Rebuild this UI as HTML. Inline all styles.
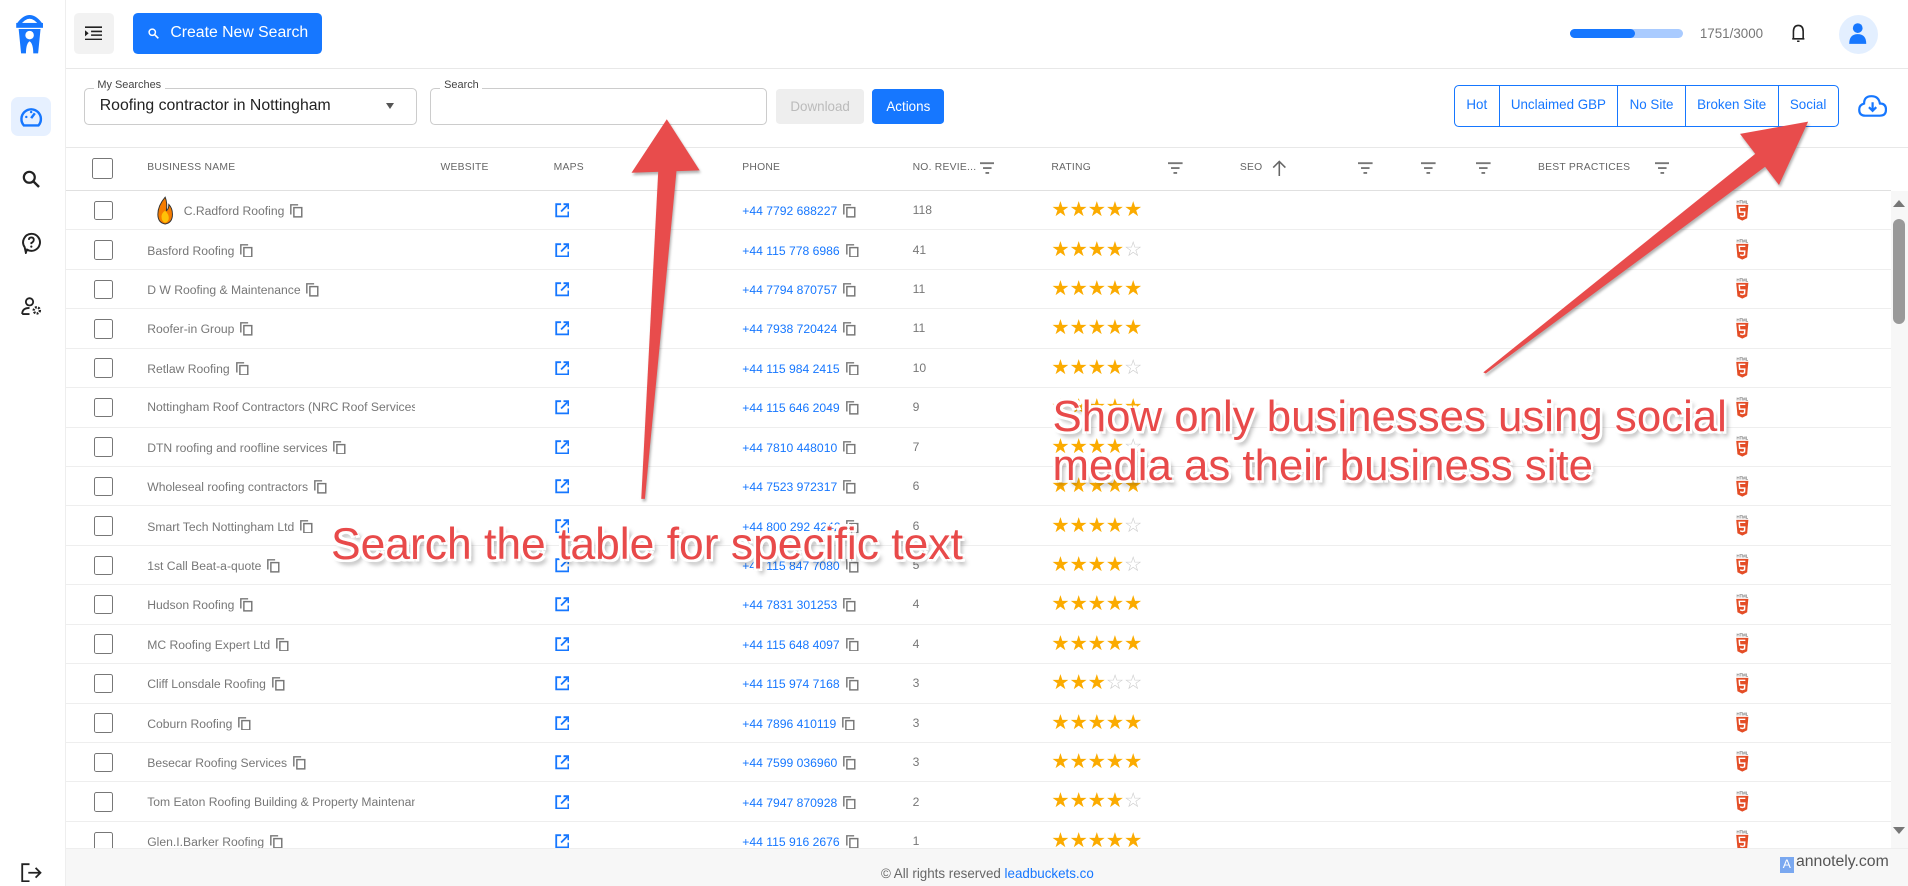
<!DOCTYPE html>
<html><head><meta charset="utf-8"><style>
*{box-sizing:border-box;margin:0;padding:0}
html,body{width:1908px;height:886px;overflow:hidden;background:#fff;font-family:"Liberation Sans",sans-serif}
#w{position:absolute;left:0;top:0;width:1568px;height:728px;zoom:1.2168;overflow:hidden}
.a{position:absolute}
.side{left:0;top:0;width:54px;height:728px;border-right:1px solid #eee;background:#fff}
.top{left:54px;top:0;right:0;height:57px;border-bottom:1px solid #e8e8e8}
.hdr{font-size:8.5px;color:#666;letter-spacing:.2px;top:133px}
.row{position:absolute;left:54px;width:1500px;height:32.4px;border-bottom:1px solid #eee;font-size:10px;color:#777}
.row>*{position:absolute;top:10px}
.cb{left:23px;top:8px!important;width:16px;height:16px;border:1.5px solid #777;border-radius:2px}
.ph{color:#1677ff}
.st{color:#fbab00;font-size:17px;letter-spacing:-0.3px;top:5px!important}
.st i{color:#ccc;font-style:normal}
.cp{display:inline-block;width:12px;height:12px;margin-left:4px;vertical-align:-2px}
.ann{font-size:35.5px;color:#e84a4a;text-shadow:0 0 3px #fff,2px 2px 0 #fff,-2px -2px 0 #fff,2px -2px 0 #fff,-2px 2px 0 #fff,3px 4px 4px rgba(0,0,0,.35);line-height:40px;white-space:nowrap}
.seg{left:1195px;top:70px;height:34px;border:1px solid #1677ff;border-radius:4px;display:flex;font-size:11px;color:#1677ff}
.seg div{padding:0 9.3px;line-height:32px;border-right:1px solid #1677ff}
.seg div:last-child{border:none}
</style></head><body><div id="w">
<svg width="0" height="0" style="position:absolute"><defs><g id="f"><path d="M0 1H12M2.5 5H9.5M4.5 9H7.5" stroke="#777" stroke-width="1.5"/></g><g id="c"><path d="M1.5 9.5V1.5H7.5" fill="none" stroke="#777" stroke-width="1.2"/><rect x="4" y="3.8" width="6.5" height="7.6" fill="none" stroke="#777" stroke-width="1.2"/></g></defs></svg>
<div class="a side">
<svg class="a" style="left:12px;top:10px" width="24" height="34" viewBox="0 0 24 34"><path d="M3 10 Q12 -2 21 10" fill="none" stroke="#1677ff" stroke-width="3"/><rect x="1" y="9" width="22" height="4" fill="#1677ff"/><path d="M3 14 H21 L19 34 H15 Q15 26 12 24 Q9 26 9 34 H5 Z" fill="#1677ff"/><circle cx="12" cy="19" r="3.5" fill="#fff"/></svg>
<div class="a" style="left:9px;top:80px;width:33px;height:32px;background:#e6f0ff;border-radius:6px"></div>
<svg class="a" style="left:16px;top:87px" width="20" height="18" viewBox="0 0 20 18"><path d="M4 16 A8 8 0 1 1 16 16 Z" fill="none" stroke="#1677ff" stroke-width="2"/><path d="M10 10 L13 6" stroke="#1677ff" stroke-width="2"/><circle cx="6" cy="9" r="1" fill="#1677ff"/><circle cx="10" cy="5" r="1" fill="#1677ff"/></svg>
<svg class="a" style="left:18px;top:140px" width="16" height="16" viewBox="0 0 16 16"><circle cx="6" cy="6" r="4.5" fill="none" stroke="#222" stroke-width="1.8"/><path d="M9.5 9.5 L14 14" stroke="#222" stroke-width="2"/></svg>
<svg class="a" style="left:17px;top:191px" width="17" height="18" viewBox="0 0 17 18"><path d="M8.5 1.5 A7 7 0 1 1 5 14.5 L4 17 L3 12.5 A7 7 0 0 1 8.5 1.5Z" fill="none" stroke="#222" stroke-width="1.6"/><path d="M6.5 6.5 Q6.5 4.5 8.5 4.5 Q10.5 4.5 10.5 6.5 Q10.5 8 8.5 9 V10" fill="none" stroke="#222" stroke-width="1.5"/><circle cx="8.5" cy="12" r=".9" fill="#222"/></svg>
<svg class="a" style="left:17px;top:244px" width="18" height="16" viewBox="0 0 18 16"><circle cx="7" cy="4" r="3" fill="none" stroke="#222" stroke-width="1.5"/><path d="M1 14 Q1 9 7 9 M1 14 H7" fill="none" stroke="#222" stroke-width="1.5"/><circle cx="13" cy="11" r="2.5" fill="none" stroke="#222" stroke-width="2" stroke-dasharray="1.5 1"/></svg>
<svg class="a" style="left:17px;top:709px" width="18" height="16" viewBox="0 0 18 16"><path d="M7 1 H1 V15 H7 M6 8 H16 M12 4 L16 8 L12 12" fill="none" stroke="#222" stroke-width="1.5"/></svg>
</div>
<div class="a top"></div>
<div class="a" style="left:61px;top:11px;width:33px;height:33px;background:#f2f2f2;border-radius:4px"></div>
<svg class="a" style="left:70px;top:21px" width="14" height="12" viewBox="0 0 14 12"><path d="M0 1H14M5 4.5H14M5 7.5H14M0 11H14" stroke="#222" stroke-width="1.3"/><path d="M0 3.5L3 6L0 8.5Z" fill="#222"/></svg>
<div class="a" style="left:109px;top:11px;width:156px;height:33px;background:#1677ff;border-radius:4px;color:#fff;font-size:13px;line-height:33px;padding-left:31px">Create New Search</div>
<svg class="a" style="left:122px;top:23px" width="9" height="9" viewBox="0 0 9 9"><circle cx="3.5" cy="3.5" r="2.6" fill="none" stroke="#fff" stroke-width="1.2"/><path d="M5.5 5.5L8.5 8.5" stroke="#fff" stroke-width="1.3"/></svg>
<div class="a" style="left:1290px;top:24px;width:93px;height:7px;background:#a9cbff;border-radius:4px"></div>
<div class="a" style="left:1290px;top:24px;width:54px;height:7px;background:#1677ff;border-radius:4px"></div>
<div class="a" style="left:1397px;top:21px;font-size:11px;color:#777">1751/3000</div>
<svg class="a" style="left:1472px;top:19px" width="12" height="17" viewBox="0 0 12 17"><path d="M2 13 V7 Q2 2 6 2 Q10 2 10 7 V13 H1 H11 M5 15 H7" fill="none" stroke="#222" stroke-width="1.3"/></svg>
<div class="a" style="left:1511px;top:12px;width:32px;height:32px;border-radius:50%;background:#e3efff"></div>
<svg class="a" style="left:1519px;top:18px" width="16" height="20" viewBox="0 0 16 20"><circle cx="8" cy="5" r="4" fill="#1677ff"/><path d="M1 18 Q1 10 8 10 Q15 10 15 18Z" fill="#1677ff"/></svg>

<div class="a" style="left:69px;top:72px;width:274px;height:31px;border:1px solid #ccc;border-radius:4px"></div>
<div class="a" style="left:77px;top:65px;background:#fff;padding:0 3px;font-size:9px;color:#444">My Searches</div>
<div class="a" style="left:82px;top:80px;font-size:13px;color:#222">Roofing contractor in Nottingham</div>
<div class="a" style="left:317px;top:85px;border:4px solid transparent;border-top:5px solid #555"></div>
<div class="a" style="left:353px;top:72px;width:277px;height:31px;border:1px solid #ccc;border-radius:4px"></div>
<div class="a" style="left:362px;top:65px;background:#fff;padding:0 3px;font-size:9px;color:#444">Search</div>
<div class="a" style="left:638px;top:73px;width:72px;height:29px;background:#eee;border-radius:3px;color:#bbb;font-size:11px;line-height:29px;text-align:center">Download</div>
<div class="a" style="left:717px;top:73px;width:59px;height:29px;background:#1677ff;border-radius:3px;color:#fff;font-size:11px;line-height:29px;text-align:center">Actions</div>
<div class="a seg"><div>Hot</div><div>Unclaimed GBP</div><div>No Site</div><div>Broken Site</div><div>Social</div></div>
<svg class="a" style="left:1527px;top:78px" width="24" height="20" viewBox="0 0 24 20"><path d="M6 17 H18 Q23 17 23 12 Q23 7 18 7 Q17 1 11 1 Q5 1 5 7 Q1 8 1 12 Q1 17 6 17Z" fill="none" stroke="#1677ff" stroke-width="1.8"/><path d="M12 6 V13 M9 10 L12 13 L15 10" fill="none" stroke="#1677ff" stroke-width="1.8"/></svg>

<div class="a" style="left:54px;top:121px;width:1514px;border-top:1px solid #e8e8e8"></div>
<div class="a" style="left:54px;top:156px;width:1500px;border-top:1.5px solid #e0e0e0"></div>
<div class="a" style="left:76px;top:130px;width:17px;height:17px;border:1.5px solid #777;border-radius:2px"></div>
<div class="a hdr" style="left:121px">BUSINESS NAME</div>
<div class="a hdr" style="left:362px">WEBSITE</div>
<div class="a hdr" style="left:455px">MAPS</div>
<div class="a hdr" style="left:610px">PHONE</div>
<div class="a hdr" style="left:750px">NO. REVIE...</div>
<div class="a hdr" style="left:864px">RATING</div>
<div class="a hdr" style="left:1019px">SEO</div>
<div class="a hdr" style="left:1264px">BEST PRACTICES</div>
<div class="a hdr" style="left:1438px">S</div>
<svg class="a" style="left:1045px;top:131px" width="12" height="14" viewBox="0 0 12 14"><path d="M6 14V2M1 7L6 2L11 7" fill="none" stroke="#666" stroke-width="1.3"/></svg>
<svg class="a" style="left:805px;top:133px" width="12" height="10"><use href="#f"/></svg>
<svg class="a" style="left:960px;top:133px" width="12" height="10"><use href="#f"/></svg>
<svg class="a" style="left:1116px;top:133px" width="12" height="10"><use href="#f"/></svg>
<svg class="a" style="left:1168px;top:133px" width="12" height="10"><use href="#f"/></svg>
<svg class="a" style="left:1213px;top:133px" width="12" height="10"><use href="#f"/></svg>
<svg class="a" style="left:1360px;top:133px" width="12" height="10"><use href="#f"/></svg>

<div id="rows"></div>

<div class="a" style="left:1554px;top:157px;width:14px;height:540px;background:#f7f7f7"></div>
<div class="a" style="left:1556px;top:180px;width:10px;height:86px;background:#999;border-radius:5px"></div>
<div class="a" style="left:1556px;top:164px;border:5px solid transparent;border-bottom:6px solid #777;border-top:none"></div>
<div class="a" style="left:1556px;top:680px;border:5px solid transparent;border-top:6px solid #777;border-bottom:none"></div>
<div class="a" style="left:54px;top:697px;width:1514px;height:31px;background:#f7f7f7;border-top:1px solid #eee"></div>
<div class="a" style="left:724px;top:712px;font-size:11px;color:#666">© All rights reserved <span style="color:#1677ff">leadbuckets.co</span></div>
<div class="a" style="left:1463px;top:701px;width:100px;height:20px;font-size:13px;color:#555"><span style="display:inline-block;width:11px;height:13px;background:#7aa8f0;color:#fff;font-size:10px;text-align:center;vertical-align:-2px;margin-right:2px">A</span>annotely.com</div>

<svg class="a" style="left:0;top:0" width="1568" height="728">
<g fill="#e84c4c" style="filter:drop-shadow(1px 2px 1px rgba(0,0,0,.3))">
<polygon points="527,410 530,410 556,140 541,140"/>
<polygon points="519,142 548,98 575,140"/>
<polygon points="1219,306 1221,307 1452,136 1443,126"/>
<polygon points="1430,110 1486,100 1462,152"/>
</g></svg>
<div class="a ann" style="left:272px;top:428px;font-size:36.5px">Search the table for specific text</div>
<div class="a ann" style="left:865px;top:323px;font-size:36px">Show only businesses using social<br>media as their business site</div>
</div>
<script>
var d=[["C.Radford Roofing","+44 7792 688227","118",5,1],["Basford Roofing","+44 115 778 6986","41",4],["D W Roofing & Maintenance","+44 7794 870757","11",5],["Roofer-in Group","+44 7938 720424","11",5],["Retlaw Roofing","+44 115 984 2415","10",4],["Nottingham Roof Contractors (NRC Roof Services)","+44 115 646 2049","9",5],["DTN roofing and roofline services","+44 7810 448010","7",4],["Wholeseal roofing contractors","+44 7523 972317","6",5],["Smart Tech Nottingham Ltd","+44 800 292 4242","6",4],["1st Call Beat-a-quote","+44 115 847 7080","5",4],["Hudson Roofing","+44 7831 301253","4",5],["MC Roofing Expert Ltd","+44 115 648 4097","4",5],["Cliff Lonsdale Roofing","+44 115 974 7168","3",3],["Coburn Roofing","+44 7896 410119","3",5],["Besecar Roofing Services","+44 7599 036960","3",5],["Tom Eaton Roofing Building & Property Maintenance","+44 7947 870928","2",4],["Glen.I.Barker Roofing","+44 115 916 2676","1",5]];
var h="";var cp='<svg class="cp" viewBox="0 0 12 12"><use href="#c"/></svg>';
d.forEach(function(r,i){var y=157+i*32.4;var s="";for(var k=0;k<5;k++)s+=k<r[3]?"★":"<i>☆</i>";
var nm=r[0].replace(/&/g,"&amp;");
h+='<div class="row" style="top:'+y+'px"><div class="cb"></div>'+
(r[4]?'<svg style="left:72px;top:4px;position:absolute" width="20" height="24" viewBox="0 0 20 24"><path d="M10 1 Q4 8 4 15 Q4 22 10 23 Q16 22 16 15 Q16 10 13 7 Q13 11 11 12 Q12 6 10 1Z" fill="#f57c00" stroke="#333" stroke-width=".8"/><path d="M10 22 Q7 21 7 17 Q7 14 10 12 Q13 15 13 18 Q13 21 10 22Z" fill="#ffc107"/></svg>':'')+
'<div style="left:'+(r[4]?97:67)+'px;max-width:'+(r[4]?190:220)+'px;overflow:hidden;white-space:nowrap">'+nm+(r[0].length<40?cp:'')+'</div>'+
'<svg style="left:402px;top:10px" width="12" height="12" viewBox="0 0 12 12"><path d="M5 1H1V11H11V7M7 1H11V5M11 1L5 7" fill="none" stroke="#1677ff" stroke-width="1.5"/></svg>'+
'<div class="ph" style="left:556px">'+r[1]+cp+'</div>'+
'<div style="left:696px">'+r[2]+'</div><div class="st" style="left:810px">'+s+'</div>'+
'<svg style="left:1372px;top:7px" width="12" height="18" viewBox="0 0 12 18"><text x="6" y="3" font-size="3.5" text-anchor="middle" fill="#333" font-family="Liberation Sans">HTML</text><path d="M1 4H11L10 15L6 17L2 15Z" fill="#e44d26"/><path d="M8.5 6H3.5L3.8 10H8L7.8 13L6 13.6L4.2 13" fill="none" stroke="#fff" stroke-width="1.2"/></svg></div>';});
document.getElementById("rows").innerHTML=h;
</script>
</body></html>
